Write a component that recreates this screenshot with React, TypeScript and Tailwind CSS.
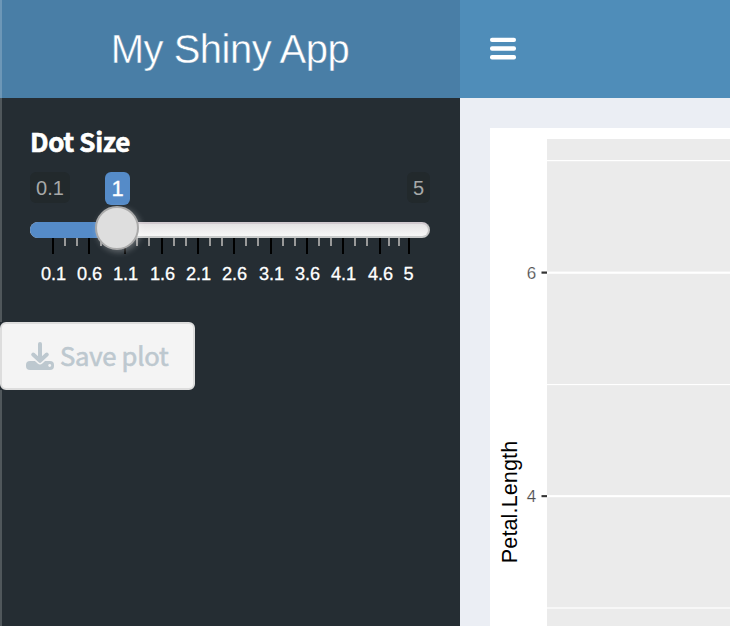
const majorTicks = [
  { x: 52, label: "0.1" },
  { x: 88, label: "0.6" },
  { x: 124, label: "1.1" },
  { x: 161, label: "1.6" },
  { x: 197, label: "2.1" },
  { x: 233, label: "2.6" },
  { x: 270, label: "3.1" },
  { x: 306, label: "3.6" },
  { x: 342, label: "4.1" },
  { x: 379, label: "4.6" },
  { x: 407, label: "5" },
];

const minorTicks = [
  64, 76, 100, 112, 136, 148, 173, 185, 209, 221, 245, 257, 282, 294, 318, 330, 354, 366, 388, 398,
];

function Header() {
  return (
    <header className="flex h-[98px] shrink-0 bg-[#4f8db9]">
      <div className="flex w-[460px] shrink-0 items-center justify-center bg-[#497ea6] text-[40px] leading-none text-white">
        <span className="whitespace-nowrap tracking-[-0.5px] [-webkit-text-stroke:0.45px_#497ea6]">My Shiny App</span>
      </div>
      <button className="flex items-center pl-[30px]" aria-label="Toggle sidebar">
        <svg width="26" height="24" viewBox="0 0 26 24" fill="white">
          <rect y="0.7" width="26" height="4.4" rx="2" />
          <rect y="9.3" width="26" height="4.4" rx="2" />
          <rect y="18" width="26" height="4.4" rx="2" />
        </svg>
      </button>
    </header>
  );
}

function Slider() {
  return (
    <div className="mt-[14px]">
      <div className="relative mx-[30px] h-[66px]">
        <div className="flex items-start justify-between text-[20px] leading-[32px] text-[#a6a8a8]">
          <span className="h-[31px] w-10 rounded-[6px] bg-[#22292c] text-center">0.1</span>
          <span className="h-[31px] w-[23px] rounded-[6px] bg-[#22292c] text-center">5</span>
        </div>
        <span className="absolute left-[75px] top-0 h-[33px] w-[25px] rounded-[6px] bg-[#558bc8] text-center text-[22px] leading-[34px] text-white [-webkit-text-stroke:0.3px_white]">
          1
        </span>
        <div className="mt-[19px] h-4 overflow-hidden rounded-full border-y-2 border-r-2 border-t-[#d0c9cf] border-r-[#c4c4c4] border-b-[#c8caca] bg-linear-to-b from-[#e4e3e4] to-[#f7f7f7]" />
        <div className="absolute left-0 top-[50px] h-4 w-[87px] rounded-l-full bg-[#558bc8]" />
        <div className="absolute left-[65px] top-[34px] z-10 size-11 rounded-full border-2 border-[#aaa] bg-[#dedede] shadow-[2px_2px_6px_rgba(255,255,255,0.3)]" />
      </div>
      <svg className="block" width="460" height="52" viewBox="0 0 460 52">
        {minorTicks.map((x) => (
          <rect key={x} x={x} y="0" width="2" height="8" fill="#999" />
        ))}
        {majorTicks.map(({ x, label }) => (
          <g key={label}>
            <rect x={label === "5" ? 408 : x} y="0" width="2" height="16" fill="#000" />
            <text x={x + 1.6} y="42" textAnchor="middle" fontSize="18.2" fill="#fff" stroke="#fff" strokeWidth="0.3">
              {label}
            </text>
          </g>
        ))}
      </svg>
    </div>
  );
}

function Sidebar() {
  return (
    <aside className="w-[460px] shrink-0 bg-[#252d33]">
      <div className="pl-[30px] pt-[27px] pb-px font-['Noto_Sans_CJK_JP','Noto_Sans',sans-serif] text-[26px] font-bold leading-[32px] text-white">
        <span className="tracking-[-0.4px] [-webkit-text-stroke:0.6px_white]">Dot Size</span>
      </div>
      <Slider />
      <button className="mt-8 flex h-[68px] w-[195px] items-center rounded-[6px] border-2 border-[#ddd] bg-[#f4f4f4] pl-6 font-['Noto_Sans_CJK_JP','Noto_Sans',sans-serif] text-[25.6px] font-normal leading-none text-[#bdc8cf]">
        <svg className="mr-[6px] shrink-0" width="28" height="28" viewBox="0 0 28 28">
          <rect y="19" width="28" height="9" rx="4" fill="currentColor" />
          <path d="M14 2V18M7.2 12.6L14 18.8L20.8 12.6" fill="none" stroke="#f4f4f4" strokeWidth="7" strokeLinecap="round" strokeLinejoin="round" />
          <path d="M14 2V18M7.2 12.6L14 18.8L20.8 12.6" fill="none" stroke="currentColor" strokeWidth="4" strokeLinecap="round" strokeLinejoin="round" />
          <circle cx="23.7" cy="23.5" r="1.4" fill="#f4f4f4" />
        </svg>
        <span className="-mt-0.5 whitespace-nowrap tracking-[-0.25px] [-webkit-text-stroke:0.6px_#bdc8cf]">Save plot</span>
      </button>
    </aside>
  );
}

function Plot() {
  return (
    <svg className="block bg-white" width="240" height="498" viewBox="0 0 240 498">
      <rect x="57" y="11" width="183" height="487" fill="#ebebeb" />
      <g fill="#fff">
        <rect x="57" y="32" width="183" height="1.2" />
        <rect x="57" y="143.6" width="183" height="2.2" />
        <rect x="57" y="256" width="183" height="1.1" />
        <rect x="57" y="367.1" width="183" height="2.1" />
        <rect x="57" y="479.4" width="183" height="1.2" />
      </g>
      <g fill="#333">
        <rect x="51.5" y="143.5" width="5.5" height="2.2" />
        <rect x="51.5" y="367.1" width="5.5" height="2.1" />
      </g>
      <g fontSize="17" fill="#4d4d4d" stroke="#fff" strokeWidth="0.2" textAnchor="middle">
        <text x="41.6" y="151">6</text>
        <text x="41.6" y="374">4</text>
      </g>
      <text transform="translate(26.8 374) rotate(-90)" textAnchor="middle" fontSize="21.6" textLength="122.5" fill="#000">
        Petal.Length
      </text>
    </svg>
  );
}

export default function App() {
  return (
    <div className="relative flex h-[626px] w-[730px] flex-col overflow-hidden bg-[#ebeef4] font-['Liberation_Sans',Arial,sans-serif]">
      <Header />
      <div className="flex min-h-0 flex-1">
        <Sidebar />
        <main className="pl-[30px] pt-[30px]">
          <Plot />
        </main>
      </div>
      <div className="absolute left-0 top-0 h-[322px] w-0.5 bg-white/20" />
      <div className="absolute bottom-0 left-0 h-[236px] w-0.5 bg-white/20" />
    </div>
  );
}
